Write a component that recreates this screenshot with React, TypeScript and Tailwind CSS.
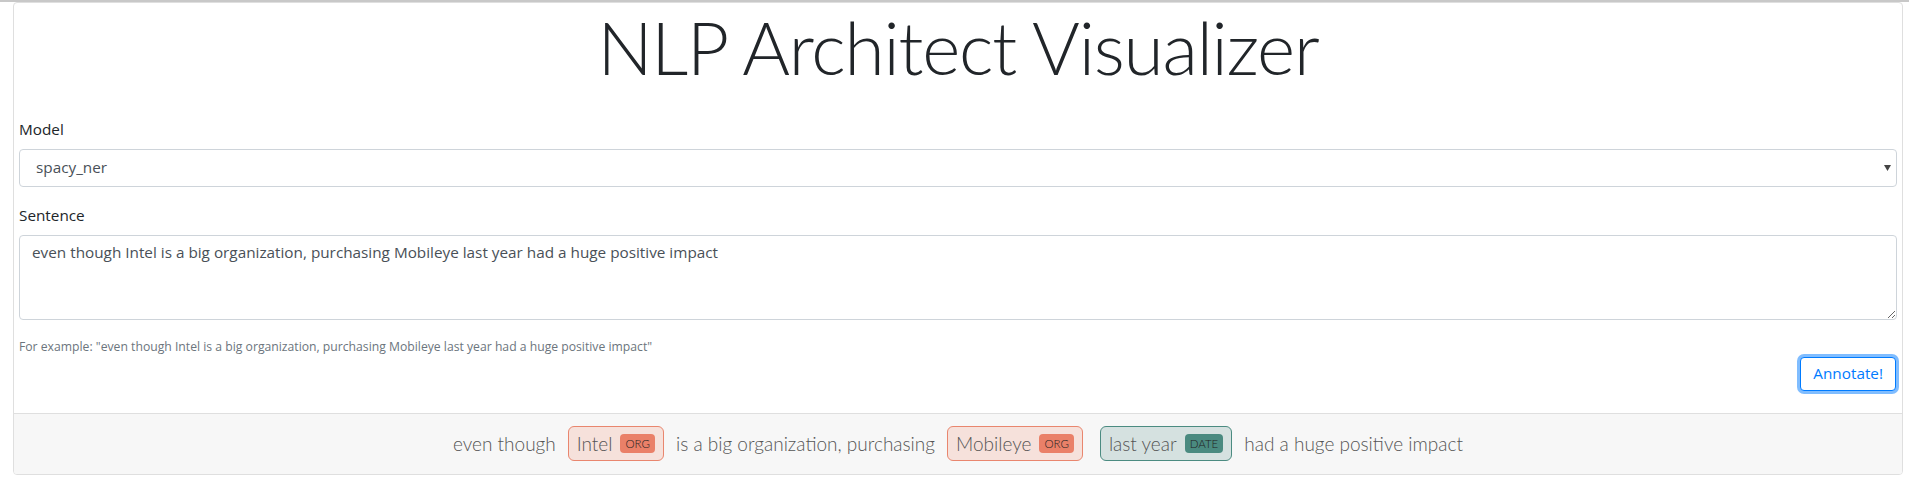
type Label = "ORG" | "DATE";
type Token = { text: string; label?: Label };

const sentence =
  "even though Intel is a big organization, purchasing Mobileye last year had a huge positive impact";

const tokens: Token[] = [
  { text: "even though" },
  { text: "Intel", label: "ORG" },
  { text: "is a big organization, purchasing" },
  { text: "Mobileye", label: "ORG" },
  { text: "last year", label: "DATE" },
  { text: "had a huge positive impact" },
];

const labelStyles: Record<Label, { box: string; badge: string }> = {
  ORG: { box: "bg-[#f6e1db] border-[#e9866e]", badge: "bg-[#ea8068]" },
  DATE: { box: "bg-[#d5e1e0] border-[#4b8b81]", badge: "bg-[#4a8a80]" },
};

const Entity = ({ text, label }: { text: string; label: Label }) => (
  <span
    className={`inline-flex items-center gap-[8px] h-[35px] px-[8px] border rounded-[6px] ${labelStyles[label].box} ${
      label === "DATE" ? "ml-[5px]" : ""
    }`}
  >
    {text}
    <span
      className={`h-[19px] px-[5px] rounded-[4px] text-[11.5px] leading-[19px] text-[#222] ${labelStyles[label].badge}`}
    >
      {label}
    </span>
  </span>
);

export default function App() {
  return (
    <div className="min-h-screen bg-white border-t-2 border-[#c8c8c8] font-[family-name:'Open_Sans',sans-serif] text-[#212529]">
      <div className="ml-[13px] mr-[6px] border border-[#dfdfdf] rounded-[4px] overflow-hidden">
        <div className="px-[5px] pb-[22px]">
          <h1 className="mt-[3px] mb-[27px] text-center text-[73px] leading-[1.15] tracking-[-1.2px] font-light font-[family-name:Lato,sans-serif]">
            NLP Architect Visualizer
          </h1>

          {/* Model picker */}
          <label className="block text-[15.3px] leading-[24px] mb-[8px]">Model</label>
          <div className="relative">
            <select className="block w-full h-[38px] appearance-none border border-[#ced4da] rounded-[4px] bg-white pl-[16px] text-[15.3px] text-[#495057] outline-none">
              <option>spacy_ner</option>
            </select>
            <svg
              className="pointer-events-none absolute right-[6px] top-[16px] w-[7px] h-[6px]"
              viewBox="0 0 7 6"
            >
              <path d="M0 0h7L3.5 6z" fill="#444" />
            </svg>
          </div>

          {/* Sentence input */}
          <label className="block mt-[16px] text-[15.3px] leading-[24px] mb-[8px]">Sentence</label>
          <textarea
            className="block w-full h-[85px] border border-[#ced4da] rounded-[4px] px-[12px] pt-[5px] text-[15.3px] leading-[1.5] text-[#495057] outline-none resize-y"
            defaultValue={sentence}
          />
          <p className="mt-[17px] text-[12.2px] leading-[19px] text-[#6c757d]">
            For example: "{sentence}"
          </p>

          <div className="flex justify-end mt-[1px]">
            <button className="mr-[1px] h-[34px] px-[12px] border border-[#007bff] rounded-[4px] bg-white text-[15.3px] text-[#007bff] ring-[3px] ring-[#80bdff]">
              Annotate!
            </button>
          </div>
        </div>

        {/* Annotated result */}
        <div className="h-[61px] border-t border-[#dfdfdf] bg-[#f7f7f7] flex items-center justify-center gap-[12px] text-[19px] font-light text-[#555] font-[family-name:Lato,sans-serif]">
          {tokens.map((t, i) =>
            t.label ? <Entity key={i} text={t.text} label={t.label} /> : <span key={i}>{t.text}</span>
          )}
        </div>
      </div>
    </div>
  );
}
